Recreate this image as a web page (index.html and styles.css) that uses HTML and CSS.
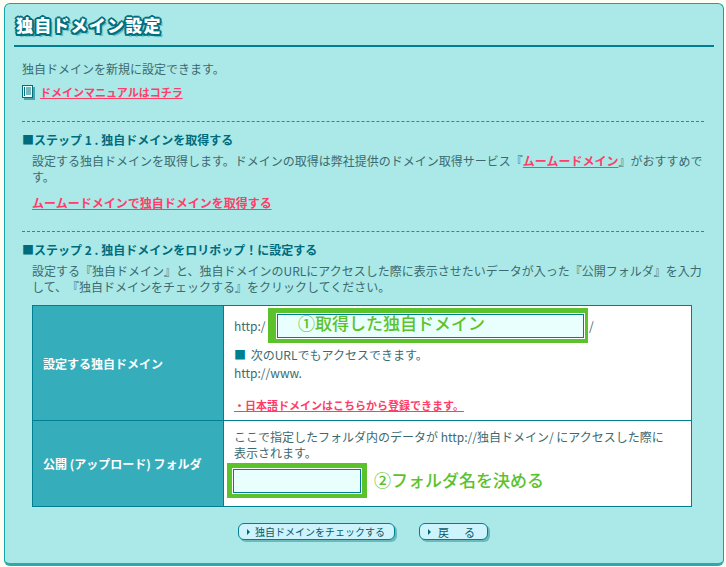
FILE: index.html
```html
<!DOCTYPE html>
<html lang="ja">
<head>
<meta charset="utf-8">
<title>独自ドメイン設定</title>
<link rel="stylesheet" href="styles.css">
</head>
<body>
<main class="panel">
  <h1 class="title">独自ドメイン設定</h1>
  <div class="content">
    <p class="intro">独自ドメインを新規に設定できます。</p>
    <p class="manual">
      <svg class="doc-icon" width="13" height="15" viewBox="0 0 13 15"><rect x="2" y="2" width="11" height="13" fill="#4ea3ad"/><rect x="0.5" y="0.5" width="10" height="12" fill="#eafffd" stroke="#00707f"/><path d="M2.5 2v9M4 3h5M4 5h5M4 7h5M4 9h5" stroke="#00707f" fill="none"/></svg>
      <a class="link link-small" href="#">ドメインマニュアルはコチラ</a>
    </p>
    <section class="step step-first">
      <h2 class="step-title">■ステップ 1 . 独自ドメインを取得する</h2>
      <p class="step-text">設定する独自ドメインを取得します。ドメインの取得は弊社提供のドメイン取得サービス『<a class="link" href="#">ムームードメイン</a>』がおすすめです。</p>
      <p class="step-link"><a class="link" href="#">ムームードメインで独自ドメインを取得する</a></p>
    </section>
    <section class="step step-second">
      <h2 class="step-title">■ステップ 2 . 独自ドメインをロリポップ！に設定する</h2>
      <p class="step-text">設定する『独自ドメイン』と、独自ドメインのURLにアクセスした際に表示させたいデータが入った『公開フォルダ』を入力して、『独自ドメインをチェックする』をクリックしてください。</p>
      <table class="form">
        <tr class="row-domain">
          <th>設定する独自ドメイン</th>
          <td>
            <div class="url-line">
              <span class="proto">http:/</span>
              <span class="mark mark-domain"><span class="field field-domain">①取得した独自ドメイン</span></span>
              <span class="slash">/</span>
            </div>
            <p class="also"><span class="sq">■</span> 次のURLでもアクセスできます。</p>
            <p class="www">http://www.</p>
            <p class="jp"><a class="link" href="#">・日本語ドメインはこちらから登録できます。</a></p>
          </td>
        </tr>
        <tr class="row-folder">
          <th>公開 (アップロード) フォルダ</th>
          <td>
            <p class="folder-note">ここで指定したフォルダ内のデータが http://独自ドメイン/ にアクセスした際に<br>表示されます。</p>
            <div class="folder-line">
              <span class="mark mark-folder"><span class="field field-folder"></span></span>
              <span class="note-green">②フォルダ名を決める</span>
            </div>
          </td>
        </tr>
      </table>
      <div class="buttons">
        <button class="btn btn-check" type="button"><span class="tri"></span>独自ドメインをチェックする</button>
        <button class="btn btn-back" type="button"><span class="tri"></span>戻　る</button>
      </div>
    </section>
  </div>
</main>
</body>
</html>
```
FILE: styles.css
```css
* { box-sizing: border-box; }
html, body { margin: 0; padding: 0; }
body {
  background: #fffef4;
  padding: 3px 2px 1px 4px;
  font-family: "Noto Sans CJK JP", "Liberation Sans", sans-serif;
  font-size: 12px;
  color: #3c6a70;
  text-spacing-trim: space-all;
}
p, h1, h2 { margin: 0; }
.panel {
  height: 563px;
  background: #aae9e7;
  border: 1px solid #14a5a8;
  border-bottom: 3px solid #2fa9a8;
  border-radius: 6px;
  padding: 11px 9px 0;
}
.title {
  height: 32px;
  border-bottom: 2px solid #007f92;
  padding: 0 0 0 2px;
  font-size: 17px;
  line-height: 20px;
  letter-spacing: 1.2px;
  font-weight: 900;
  color: #fff;
  text-shadow: 2px 0 0 #00707f, -2px 0 0 #00707f, 0 2px 0 #00707f, 0 -2px 0 #00707f,
    1.5px 1.5px 0 #00707f, -1.5px 1.5px 0 #00707f, 1.5px -1.5px 0 #00707f, -1.5px -1.5px 0 #00707f,
    3px 3px 1px #5bb7bd;
}
.content { padding: 14px 10px 0 8px; }
.intro { line-height: 16px; }
.manual { display: flex; align-items: center; margin-top: 7px; height: 16px; gap: 5px; }
.doc-icon { flex: none; }
.link { color: #ff3d68; font-weight: 700; text-decoration: underline; }
.link-small { font-size: 11px; }
.step { border-top: 1px dashed #2b8a94; }
.step-first { margin-top: 21px; padding-top: 10px; }
.step-second { margin-top: 20px; padding-top: 10px; }
.step-title { font-size: 12px; line-height: 16px; font-weight: 700; color: #006b7d; }
.step-text { margin: 5px 0 0 10px; line-height: 16px; }
.step-link { margin: 10px 0 0 10px; line-height: 16px; }
.form {
  margin: 10px 0 0 10px;
  width: 660px;
  border-collapse: collapse;
  table-layout: fixed;
}
.form th, .form td { border: 1px solid #007f92; }
.form th {
  width: 191px;
  background: #35adbb;
  color: #fff;
  font-weight: 700;
  text-align: left;
  padding: 0 0 0 10px;
  font-size: 12px;
}
.form td { background: #fff; padding: 0 10px; vertical-align: top; }
.row-domain { height: 115px; }
.row-folder { height: 86px; }
.url-line { display: flex; align-items: center; height: 36px; margin-top: 1px; }
.proto { width: 34px; flex: none; }
.slash { margin-left: 1px; }
.mark { display: block; background: #5cc22c; flex: none; }
.mark-domain { width: 320px; height: 35px; padding: 6px 4px 5px 9px; }
.mark-folder { width: 140px; height: 35px; padding: 6px 6px 5px 6px; margin-left: -7px; }
.field {
  display: block;
  height: 100%;
  background: #e8fffd;
  border: 1px solid #007f92;
  box-shadow: 0 0 0 1px #fff;
}
.field-domain {
  padding-left: 20px;
  font-size: 17px;
  line-height: 15px;
  font-weight: 500;
  color: #5cc22c;
}
.also { margin-top: 3px; line-height: 18px; }
.sq { color: #007f92; margin-right: 2px; }
.www { line-height: 18px; }
.jp { margin-top: 15px; line-height: 16px; }
.jp .link { display: block; width: 230px; font-size: 11px; white-space: nowrap; }
.folder-note { margin-top: 8px; line-height: 16px; }
.folder-line { display: flex; align-items: center; gap: 7px; margin-top: 2px; }
.note-green { font-size: 17px; line-height: 22px; margin-bottom: 2px; font-weight: 500; color: #5cc22c; }
.buttons { display: flex; gap: 24px; margin: 16px 0 0 216px; }
.btn {
  display: flex;
  align-items: center;
  height: 17px;
  padding: 0 0 0 8px;
  background: #cdf3fd;
  border: 1px solid #007f92;
  border-radius: 6px;
  box-shadow: 2px 2px 0 #6bb8bd;
  font-family: inherit;
  font-size: 10px;
  line-height: 14px;
  white-space: nowrap;
  color: #0a5a6a;
}
.btn-check { width: 157px; }
.btn-back { width: 69px; font-size: 11px; letter-spacing: 2px; }
.btn-back .tri { margin-right: 7px; }
.tri {
  flex: none;
  width: 0;
  height: 0;
  margin-right: 5px;
  border-left: 3px solid #006b7d;
  border-top: 3px solid transparent;
  border-bottom: 3px solid transparent;
}
```
